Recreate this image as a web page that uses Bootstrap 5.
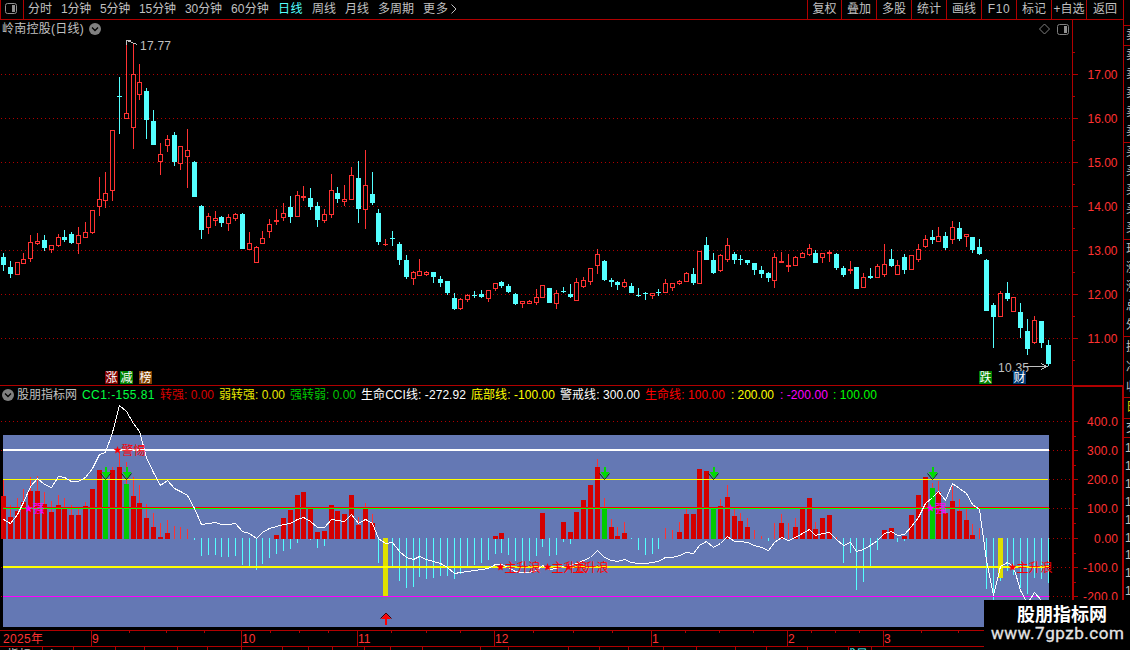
<!DOCTYPE html>
<html lang="zh-CN">
<head>
<meta charset="utf-8">
<title>岭南控股 日线</title>
<link href="https://cdn.jsdelivr.net/npm/bootstrap@5.3.0/dist/css/bootstrap.min.css" rel="stylesheet">
<style>
:root{--line:#b00000;--txt:#c0c0c0;--hot:#ff3232;--ice:#54ffff}
html,body{height:650px;overflow:hidden}
body{background:#000;color:var(--txt);font:12px/18px "Liberation Sans","Noto Sans CJK SC",sans-serif}
svg{display:block;flex:none}
svg text{font-family:"Liberation Sans","Noto Sans CJK SC",sans-serif;font-size:12px}
.topbar{height:20px;border-bottom:1px solid var(--line);line-height:19px}
.toggle-cell{width:24px;height:19px;border:solid var(--line);border-width:0 1px;padding:3px 0 0 3px}
.periods{gap:9px;padding-left:4px}
.tools>span{width:35px;height:19px;border-left:1px solid var(--line);text-align:center}
.tools>span:first-child{width:34px}
.tools>span:last-child{width:37px}
.wide-key{letter-spacing:.6px}
.main-col{width:1123px}
.side-col{width:7px;height:650px;border-left:1px solid var(--line)}
.side-col .cell{border-bottom:1px solid var(--line);overflow:hidden;padding-left:2px}
.side-col .cell div{width:12px;white-space:nowrap}
.price-head{height:18px}
.plot-head{width:1073px;border-right:1px solid var(--line)}
.stock-name{margin-left:2px;line-height:20px}
.cci-head{height:18px;border-top:1px solid var(--line)}
.cci-axis-head{border:2px solid var(--line);border-bottom:0;margin:-1px -1px 0 0;width:52px;height:18px}
.legend-row{width:1072px;padding-left:2px}
.fit{display:inline-block;white-space:nowrap}
.site-tag{right:0;bottom:0;width:146px;height:50px;background:#000;color:#fff}
</style>
</head>
<body>
<div class="d-flex position-relative">
  <div class="main-col flex-shrink-0">
    <div class="topbar d-flex">
      <div class="toggle-cell"><svg width="14" height="12"><rect x="1.5" y=".5" width="11" height="10" rx="2" fill="none" stroke="#909090"/><rect x="8" y="2" width="3" height="7" fill="#909090"/></svg></div>
      <div class="periods d-flex">
        <span class="fit" data-w="24">分时</span><span class="fit" data-w="30">1分钟</span><span class="fit" data-w="30">5分钟</span><span class="fit" data-w="37">15分钟</span><span class="fit" data-w="37">30分钟</span><span class="fit" data-w="38">60分钟</span><span class="fit" data-w="25" style="color:#54ffff">日线</span><span class="fit" data-w="24">周线</span><span class="fit" data-w="24">月线</span><span class="fit" data-w="36">多周期</span><span class="d-flex"><span class="fit" data-w="26">更多</span><svg width="8" height="18"><path d="M2.500 4.500L7 9L2.500 13.500" fill="none" stroke="#c0c0c0"/></svg></span>
      </div>
      <div class="tools d-flex ms-auto">
        <span>复权</span><span>叠加</span><span>多股</span><span>统计</span><span>画线</span><span class="wide-key">F10</span><span>标记</span><span class="text-nowrap">+自选</span><span>返回</span>
      </div>
    </div>
    <div class="price-head d-flex">
      <div class="plot-head d-flex align-items-center">
        <span class="fit stock-name" data-w="82">岭南控股(日线)</span>
        <svg class="ms-1" width="14" height="14"><circle cx="7" cy="7" r="6" fill="#808080"/><path d="M4 5.5L7 8.5L10 5.5" fill="none" stroke="#000" stroke-width="1.3"/></svg>
        <svg class="ms-auto" width="35" height="14"><path d="M7.500 2L12.500 7L7.500 12L2.500 7Z" fill="none" stroke="#808080"/><rect x="20.500" y="2.500" width="11" height="10" rx="2" fill="none" stroke="#808080"/><rect x="27" y="4" width="3" height="7" fill="#909090"/></svg>
      </div>
    </div>
    <svg id="price" width="1123" height="347" viewBox="0 38 1123 347"></svg>
    <div class="cci-head d-flex">
      <div class="legend-row d-flex align-items-center">
        <svg width="12" height="14"><circle cx="6" cy="7" r="6" fill="#808080"/><path d="M3 5.500L6 8.500L9 5.500" fill="none" stroke="#000" stroke-width="1.300"/></svg>
        <div id="legend" class="d-flex"></div>
      </div>
      <div class="cci-axis-head"></div>
    </div>
    <svg id="cci" width="1124" height="227" viewBox="0 403 1124 227"></svg>
    <svg id="dates" width="1123" height="20" viewBox="0 630 1123 20"></svg>
  </div>
  <div id="side" class="side-col flex-shrink-0 overflow-hidden"></div>
  <div class="site-tag position-absolute">
    <svg width="146" height="50"><text x="33" y="21" textLength="90" style="font-size:18px;font-weight:700" fill="#fff">股朋指标网</text><text x="7" y="39" textLength="133" style="font-family:Roboto;font-size:17px" fill="#e4e4e4" stroke="#e4e4e4" stroke-width=".3">www.7gpzb.com</text></svg>
  </div>
</div>
<script src="https://cdn.jsdelivr.net/npm/bootstrap@5.3.0/dist/js/bootstrap.bundle.min.js"></script>
<script>
const RED='#ff3232', ICE='#54ffff', LINE='#b00000';
const rect=(x,y,w,h,f)=>`<rect x="${x}" y="${y}" width="${w}" height="${h}" fill="${f}"/>`;
const label=(x,y,t,w,f)=>`<text x="${x}" y="${y}" ${w?`textLength="${w}"`:''} fill="${f}">${t}</text>`;
const dots=(y,a=1,b=1072)=>`<path d="M${a} ${y+.5}H${b}" stroke="${LINE}" stroke-dasharray="1 3" shape-rendering="crispEdges"/>`;

// x, high, body top, body bottom, low, direction (1 = up, 0 = down)
const K=`3 253 257 265 271 0|10 261 267 274 278 0|17 262 262 275 275 1|23 253 259 264 264 1|30 235 242 259 262 1|37 233 241 244 245 1|44 235 240 248 251 0|51 245 245 250 253 1|58 234 237 246 247 1|64 230 237 240 242 0|71 232 234 243 244 0|78 227 235 244 254 1|85 222 232 238 238 1|92 210 210 233 234 1|99 177 199 207 216 1|105 172 193 201 208 1|112 130 130 191 201 1|119 77 96 97 134 0|126 42 113 119 119 1|133 44 74 128 149 1|139 64 82 95 100 1|146 88 91 120 139 0|153 110 121 145 145 0|160 143 154 162 175 1|167 135 139 146 152 1|174 132 135 162 166 0|180 146 146 164 170 1|187 129 150 157 188 1|194 161 162 197 197 0|201 205 206 230 239 0|208 213 216 228 234 1|215 211 218 221 226 1|221 216 217 223 227 0|228 214 217 224 231 1|235 213 214 219 221 1|242 213 214 249 249 0|249 232 243 250 250 1|256 246 247 263 263 1|262 231 238 244 244 1|269 219 224 232 238 1|276 209 220 222 225 1|283 203 213 218 221 1|290 196 207 217 223 0|297 191 195 217 217 1|303 186 196 198 201 1|310 188 198 207 210 0|317 202 206 220 227 0|324 209 214 221 223 1|331 174 190 215 218 1|337 187 193 199 203 0|344 185 199 202 206 1|351 167 175 200 200 1|358 161 178 209 223 0|365 150 185 210 229 1|372 172 194 203 205 0|378 209 213 242 245 0|385 239 244 245 246 1|392 231 238 239 246 0|399 242 244 260 265 0|406 255 260 277 279 0|413 271 272 279 285 1|419 259 271 276 276 1|426 271 272 275 276 1|433 272 272 277 283 0|440 276 279 283 287 0|447 281 281 293 295 0|454 293 298 309 310 0|460 298 299 309 310 1|467 294 295 300 302 1|474 291 295 296 298 0|481 290 294 297 298 0|488 290 290 299 302 1|495 283 283 289 291 1|501 281 282 286 288 0|508 284 286 292 293 0|515 293 294 304 305 0|522 301 301 304 308 1|529 300 301 304 304 1|536 289 297 303 305 1|542 285 285 298 298 1|549 288 288 303 303 0|556 290 293 304 309 1|563 287 291 292 293 0|570 284 294 297 298 0|576 278 282 301 301 1|583 277 280 287 288 1|590 268 268 282 285 1|597 249 254 266 274 1|604 260 261 280 281 0|611 278 280 282 287 0|617 281 282 285 290 0|624 279 282 287 288 1|631 283 286 293 293 0|638 288 295 296 297 0|645 292 293 294 300 0|652 293 293 296 299 1|658 289 292 293 296 0|665 279 283 293 293 1|672 283 283 288 291 1|679 280 281 284 285 1|686 272 273 282 282 1|693 268 274 283 285 0|699 251 251 284 284 1|706 237 245 260 260 0|713 253 260 273 274 0|720 254 255 271 272 1|727 238 245 260 262 1|734 252 254 260 264 0|740 255 259 260 265 0|747 260 260 263 265 0|754 263 263 270 275 0|761 266 270 274 278 0|768 272 273 278 282 0|774 253 257 281 288 1|781 252 261 263 263 1|788 254 265 267 272 1|795 256 257 266 266 1|802 252 253 258 258 1|809 244 248 255 256 1|815 250 253 263 263 0|822 253 253 258 263 1|829 250 252 254 262 1|836 253 254 268 270 0|843 266 268 275 277 0|850 261 269 271 274 1|856 267 267 289 289 0|863 273 277 288 288 1|870 268 276 278 279 0|877 264 266 278 278 1|884 244 264 275 277 1|891 249 259 266 267 0|897 260 265 275 275 1|904 254 257 270 274 0|911 255 255 270 270 1|918 244 249 260 262 1|925 235 239 247 248 1|932 230 237 240 244 0|938 227 236 242 242 1|945 232 236 248 250 0|952 221 227 240 244 1|959 222 228 239 241 0|966 234 234 237 247 1|972 237 237 250 253 0|979 239 247 254 255 0|986 259 260 311 311 0|993 303 305 317 348 0|1000 291 293 317 317 1|1007 282 293 299 301 0|1013 297 297 312 312 1|1020 303 312 328 338 0|1027 319 331 349 355 0|1034 316 320 343 344 1|1041 321 321 343 348 0|1048 340 345 364 366 0`.split('|').map(r=>r.split(' ').map(Number));

let p='';
[74,118,162,206,250,294,338].forEach((y,i)=>{p+=dots(y)+rect(1073,y,5,1,LINE)+rect(1073,y+22,2,1,LINE)+label(1087.500,y+4.500,(17-i)+'.00',30,RED)});
p+=rect(1073,52,2,1,LINE)+rect(1072,38,1,347,LINE);
K.forEach(([x,h,t,b,l,up])=>{
  const c=up?RED:ICE;
  p+=rect(x,h,1,l-h,c)+rect(x-2,t,5,b-t,c);
  if(up&&b-t>2)p+=rect(x-1,t+1,3,b-t-2,'#000');
});
p+='<path d="M126.500 40.500L137.500 44.500M126 45V40.500H131" fill="none" stroke="#c0c0c0" shape-rendering="crispEdges"/>'+label(140,49.500,'17.77',31,'#c0c0c0');
p+=label(998,371.500,'10.35',31,'#c0c0c0')+'<path d="M1024 366.500H1047M1041 363.500L1047 366.500L1041 369.500" fill="none" stroke="#c0c0c0" shape-rendering="crispEdges"/>';
[[105,'涨','#800000'],[120,'减','#008000'],[139,'榜','#804000'],[979,'跌','#008000'],[1013,'财','#003870']].forEach(([x,t,c])=>p+=rect(x,371,13,13,c)+label(x+.5,382,t,0,'#fff'));
document.getElementById('price').innerHTML=p;

const LEG=[['股朋指标网',3,60,'#c0c0c0'],['CC1:-155.81',5,73,'#00ff40'],['转强: 0.00',5,54,'#d80000'],['弱转强: 0.00',5,66,'#e8e800'],['强转弱: 0.00',5,66,'#00c800'],['生命CCI线: -272.92',5,105,'#fff'],['底部线: -100.00',5,84,'#ffff00'],['警戒线: 300.00',5,80,'#fff'],['生命线: 100.00',5,80,'#ff0000'],[': 200.00',6,43,'#ffff00'],[': -200.00',6,48,'#ff00ff'],[': 100.00',5,44,'#00ff00']];
document.getElementById('legend').innerHTML=LEG.map(([t,m,w,c])=>`<span class="fit" data-w="${w}" style="margin-left:${m}px;color:${c}">${t}</span>`).join('');

// wide bars: x top colour
const BARS=`3 496|10 517|17 511|23 502|30 491|37 491|44 504|51 512|58 505|64 509|71 515|78 515|85 506|92 489|99 470|105 479 g|112 470|119 467|126 484 g|133 496|139 503|146 518|153 527|160 537|167 533|276 535|283 518|290 510|297 495|303 492|310 509|317 532|324 531|331 505|337 511|344 514|351 495|358 525|365 509|372 523|495 536|501 533|542 513|563 522|570 532|576 512|583 500|590 485|597 467|604 508 g|611 527|617 536|624 533|679 532|686 514|693 514|699 469|706 471|713 509 g|720 506|727 497|734 516|740 521|747 527|781 523|795 527|802 509|809 498|815 529|822 518|829 515|884 530|891 528|904 536|911 515|918 495|925 477|932 488 g|938 492|945 513|952 501|959 511|966 520|972 535`;
const UP=`3 480|10 505|17 498|23 489|30 477|37 476|44 492|51 501|58 495|64 498|71 505|78 509|85 502|112 467|119 452|126 462|133 477|139 485|146 504|153 513|160 523|167 520|174 526|180 527|187 529|358 517|365 503|372 514|597 459|604 498|611 519|617 527|624 522|665 528|672 530|679 522|686 509|720 499|727 485|734 509|740 513|747 518|754 530|761 536|774 523|781 514|788 523|795 518|815 522|836 537|932 483|938 481|952 486|959 499|966 509|972 524|979 528`;
const DOWN=`194 540|201 556|208 555|215 555|221 557|228 557|235 556|242 565|249 566|256 570|262 564|269 558|276 554|283 551|290 549|297 543|310 540|317 548|324 546|378 563|392 566|399 581|406 588|413 587|419 577|426 579|433 578|440 576|447 576|454 579|460 574|467 568|474 565|481 563|488 560|495 554|501 553|508 555|515 561|522 565|529 561|536 556|542 547|549 556|556 555|563 542|570 544|631 539|638 550|645 555|652 554|658 549|768 541|843 563|850 553|856 590|863 582|870 567|877 550|897 542|904 541|986 589|993 600|1000 581|1007 571|1013 575|1020 588|1027 594|1034 578|1041 579|1048 583`;
const CURVE=[519,523,514,502,486,478,484,487,476,477,481,481,477,468,454,452,432,405,411,423,431,457,472,485,480,488,491,495,508,524,523,522,524,524,523,531,533,538,532,528,526,524,523,519,517,521,527,527,519,520,521,514,523,519,523,538,543,542,551,557,559,556,559,561,563,567,573,572,571,570,569,568,564,564,567,571,572,572,570,565,569,568,566,565,563,560,557,550,557,560,561,559,562,563,563,562,561,557,557,555,552,553,545,541,547,543,536,541,541,542,545,547,550,542,537,540,537,533,529,535,533,532,539,545,542,551,549,545,540,533,531,535,534,526,517,503,497,491,500,483,488,493,504,509,560,595,566,562,566,590,603,592,600,610];
const rows=s=>s.split('|').map(r=>r.split(' '));
let c=dots(421)+[450,567,596].map(y=>rect(1,y,1,1,LINE)).join('')+rect(3,435,1046,192,'#6478b4');
[450,479,508,538,567,596].forEach(y=>c+=dots(y,1049));
rows(DOWN).forEach(([x,y])=>c+=rect(x,538,1,y-538,ICE));
rows(UP).forEach(([x,y])=>c+=rect(x,y,1,539-y,RED));
rows(BARS).forEach(([x,y,g])=>c+=rect(x-2,y,5,539-y,g?'#00cc00':'#d40000'));
c+=rect(383,538,5,58,'#e0e000')+rect(998,538,5,40,'#e0e000');
c+=rect(3,449,1046,2,'#fff')+rect(3,479,1045,1,'#ffff00')+rect(3,507,1046,1,'#ff0000')+rect(3,508,1046,1,'#00ff00')+rect(3,566,1046,2,'#ffff00')+rect(3,596,1046,1,'#ff00ff');
c+=`<polyline fill="none" stroke="#fff" shape-rendering="crispEdges" points="${CURVE.map((y,i)=>(K[i][0]+.5)+','+(y+.5)).join(' ')}"/>`;
[105,126,604,713,932].forEach(x=>c+=`<path d="M${x-4.500} 473.500L${x+.5} 479.500L${x+5.500} 473.500" fill="none" stroke="#003800" stroke-width="1"/><path d="M${x} 467h2v5h3.500l-4.500 6.500l-4.500 -6.500h3.500z" fill="#00dc00"/>`);
c+='<path d="M380.500 618.500L386 613L391.500 618.500" fill="none" stroke="#300" stroke-width="1"/><path d="M386 613.500l5 5.500h-4v6h-2v-6h-4z" fill="#f00"/>';
const star=(x,y,f)=>`<path transform="translate(${x} ${y})" d="M0-4L1-1.200H4L1.700.7L2.500 3.600L0 1.900L-2.500 3.600L-1.700.7L-4-1.200H-1Z" fill="${f}"/>`;
const mark=(x,y,t,w,f)=>star(x,y,f)+label(x+4,y+4.500,t,w,f);
c+=mark(117.5,450,'警惕',24,'#ff0000')+mark(28.500,508.500,'强',0,'#ff00ff')+mark(930.500,508,'强',0,'#ff00ff');
[500.5,547.5,568.5,1012.5].forEach(x=>c+=mark(x,567,'主升浪',36,'#ff0000'));
c+=rect(1072,403,2,227,LINE)+rect(1122,403,2,227,LINE);
[421,450,479,508,538,567,596].forEach((y,i)=>{const t=i==4?'0.00':(400-i*100)+'.0';c+=rect(1074,y,4,1,LINE)+(i<6?rect(1074,y+15,2,1,LINE):'')+`<text x="1118" y="${y+5}" text-anchor="end" textLength="${i==4?24:i>4?35:31}" fill="${RED}">${t}</text>`});
document.getElementById('cci').innerHTML=c;

let d=rect(0,630,1123,1,LINE)+rect(0,646,1123,1,LINE);
[91,241,357,494,651,787,883].forEach((x,i)=>d+=rect(x,630,1,16,LINE)+label(x+1,643,['9','10','11','12','1','2','3'][i],0,RED));
[129,166,204,270,299,328,391,426,460,533,573,612,685,719,753,811,835,859,921,958].forEach(x=>d+=rect(x,631,1,2,LINE));
[42,73,115,144,177,207,241,282,308,332,364,390,422,480,508,568,599,628,663,696,735,766,807,848,871].forEach(x=>d+=rect(x,646,1,4,LINE));
d+=label(3,643,'2025年',40,RED)+label(7,659,'指标',0,'#c0c0c0')+label(46,660,'窗',0,'#c0c0c0')+label(844,659,'成量',0,ICE);
document.getElementById('dates').innerHTML=d;

// clipped quote column: height, glyphs, colour, line height
const SIDE=[[26,''],[20,'卖'],[97,'卖卖卖卖卖','',19],[97,'买买买买买','',19],[97,'现涨涨总外','',19],[61,'换净收','',20],[21,'日','#d8c800'],[19,'交']];
document.getElementById('side').innerHTML=SIDE.map(([h,t,col,lh])=>`<div class="cell" style="height:${h}px;color:${col||'#c0c0c0'};line-height:${lh||18}px">${[...t].map(g=>`<div>${g}</div>`).join('')}</div>`).join('')+'<div style="padding-left:1px;line-height:17.9px;padding-top:2px">'+'<div>1</div>'.repeat(9)+'</div>';

// spread letters so every caption fills its column
document.querySelectorAll('.fit').forEach(e=>{const w=+e.dataset.w,n=e.textContent.length;e.style.letterSpacing=((w-e.getBoundingClientRect().width)/n)+'px';e.style.width=w+'px'});
</script>
</body>
</html>
